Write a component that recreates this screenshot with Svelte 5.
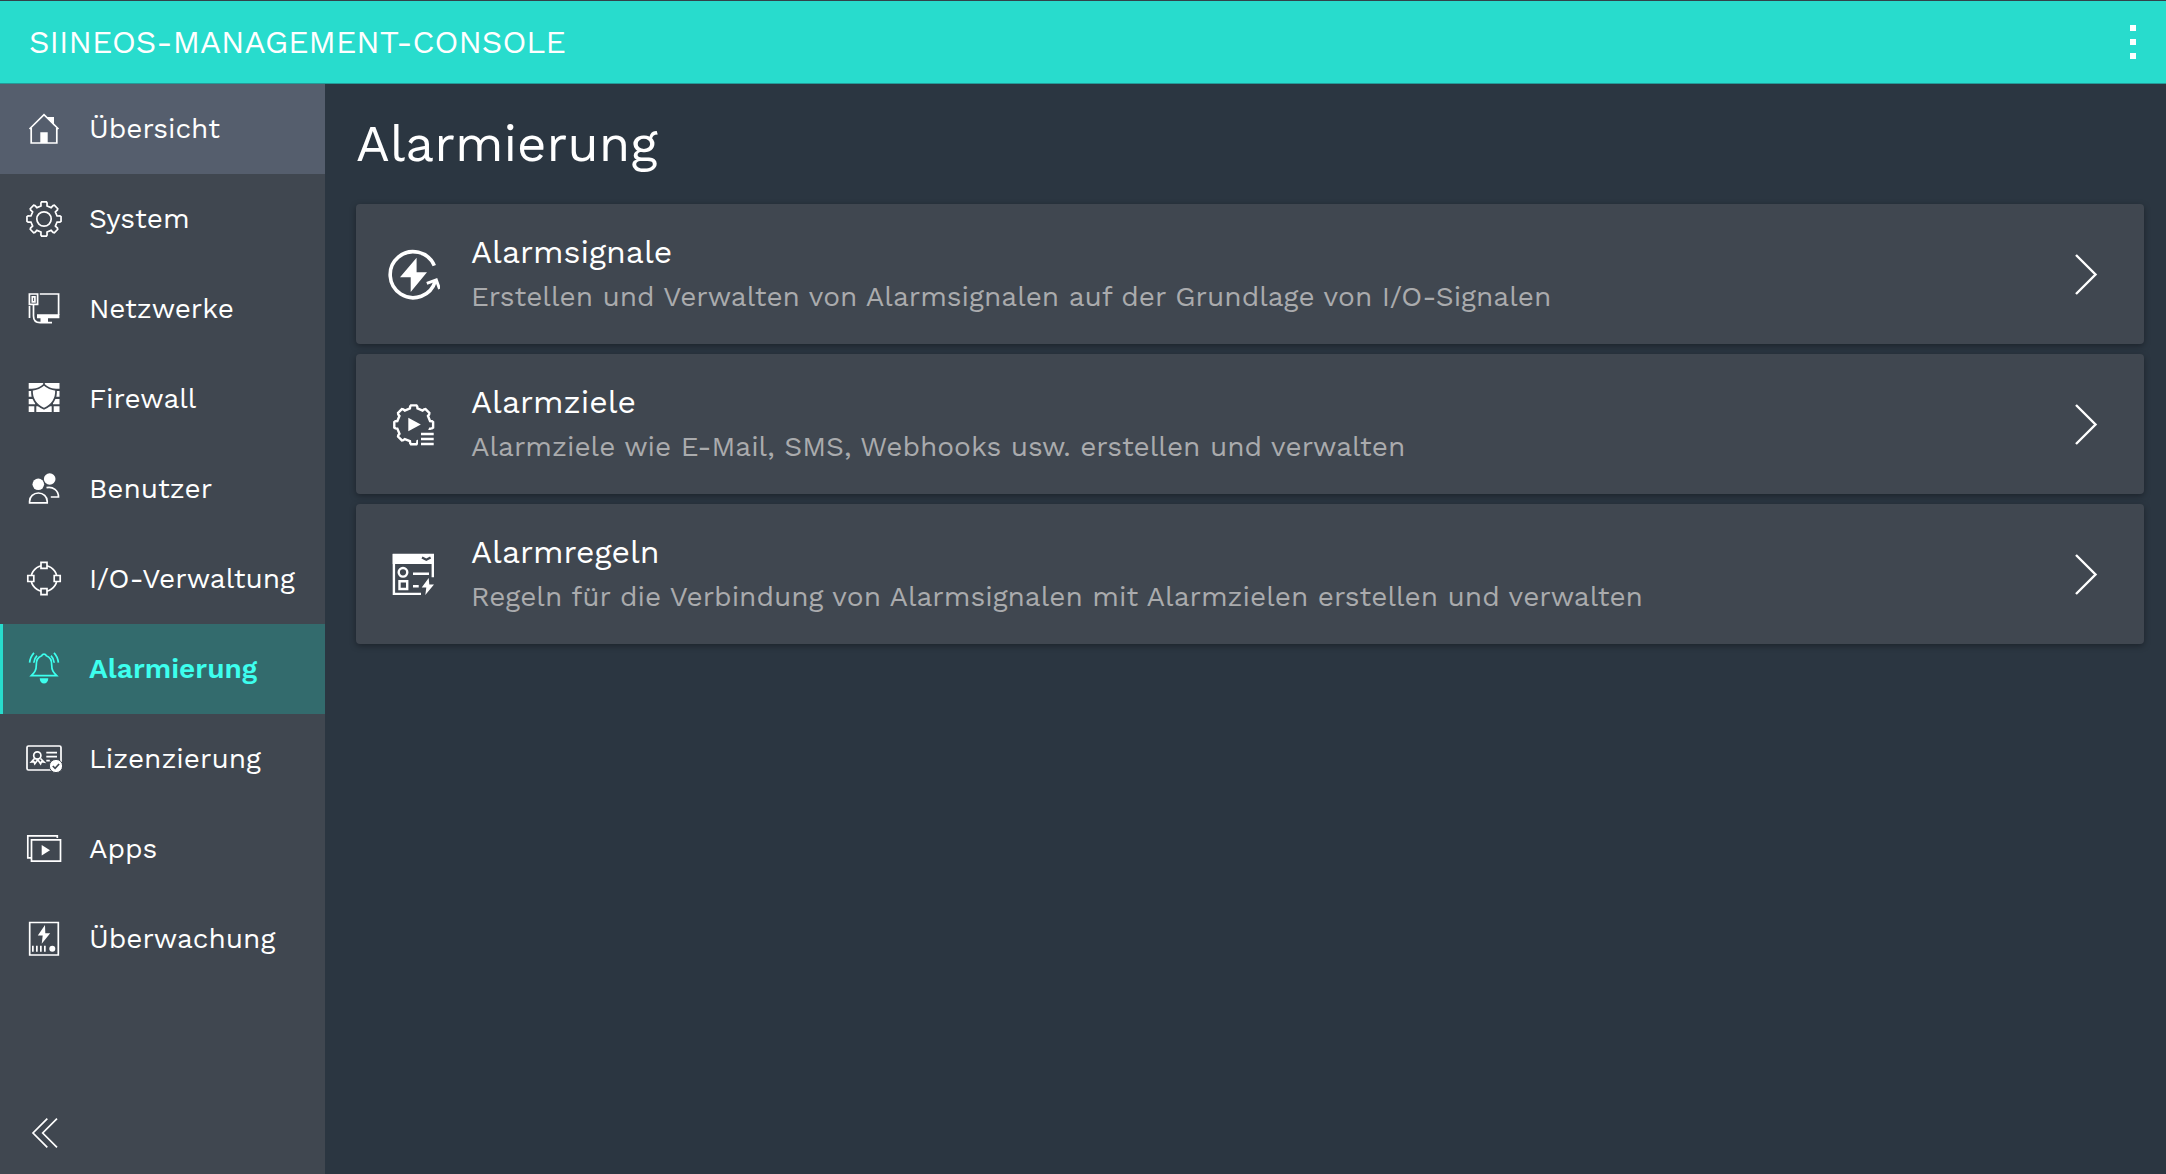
<script lang="ts">
  type Entry = { id: string; label: string };
  type Card = { id: string; title: string; text: string };

  const entries: Entry[] = [
    { id: "overview", label: "Übersicht" },
    { id: "system", label: "System" },
    { id: "networks", label: "Netzwerke" },
    { id: "firewall", label: "Firewall" },
    { id: "users", label: "Benutzer" },
    { id: "io", label: "I/O-Verwaltung" },
    { id: "alarms", label: "Alarmierung" },
    { id: "license", label: "Lizenzierung" },
    { id: "apps", label: "Apps" },
    { id: "monitoring", label: "Überwachung" },
  ];

  const cards: Card[] = [
    { id: "signals", title: "Alarmsignale", text: "Erstellen und Verwalten von Alarmsignalen auf der Grundlage von I/O-Signalen" },
    { id: "targets", title: "Alarmziele", text: "Alarmziele wie E-Mail, SMS, Webhooks usw. erstellen und verwalten" },
    { id: "rules", title: "Alarmregeln", text: "Regeln für die Verbindung von Alarmsignalen mit Alarmzielen erstellen und verwalten" },
  ];

  let active = $state("alarms");

  // outline of a cog with eight teeth
  function gear(cx: number, cy: number, outer: number, inner: number) {
    const steps: [number, number][] = [[-13, inner], [-11, outer - 1], [-8, outer], [8, outer], [11, outer - 1], [13, inner]];
    const points: string[] = [];
    for (let tooth = 0; tooth < 8; tooth++) {
      for (const [offset, radius] of steps) {
        const a = ((tooth * 45 + offset) * Math.PI) / 180;
        points.push(`${(cx + radius * Math.sin(a)).toFixed(2)} ${(cy - radius * Math.cos(a)).toFixed(2)}`);
      }
    }
    return `M${points.join("L")}Z`;
  }
</script>

<div class="app">
  <header>
    <span class="brand">SIINEOS-MANAGEMENT-CONSOLE</span>
    <button class="menu" aria-label="Menü">
      <svg viewBox="0 0 6 34" width="6" height="34"><path d="M0 0h6v6H0zM0 14h6v6H0zM0 28h6v6H0z" /></svg>
    </button>
  </header>

  <div class="body">
    <nav>
      {#each entries as entry (entry.id)}
        <a href="#{entry.id}" class:hover={entry.id === "overview"} class:active={entry.id === active} onclick={() => (active = entry.id)}>
          <svg class="icon" viewBox="0 0 36 36" width="36" height="36" aria-hidden="true">
            {#if entry.id === "overview"}
              <path d="M3.5 18 18 3.7 32.5 18M5.2 17v15h25.6V17" />
              <path class="fill" d="M14.3 21.3h7.4V32h-7.4zM20.5 6H28v8.5z" />
            {:else if entry.id === "system"}
              <path d={gear(18, 18, 17.2, 13.4)} />
              <circle cx="18" cy="18" r="7.2" />
            {:else if entry.id === "networks"}
              <path d="M3.4 3h8.2v10.3H3.4zM6.3 5.8h2.6v5H6.3zM13.8 3h18.8v21M7.5 13.3V25q0 6.6 6.6 6.6H26M3.5 15v12" />
              <path class="fill" d="M11 23.3h22.4v4H22v4H14.5v-4H11z" />
            {:else if entry.id === "firewall"}
              <path class="fill" d="M2.7 2h14.5v5.7H2.7zM18.8 2h14.7v5.7H18.8zM2.7 10h3v5.7h-3zM7.5 10h21v5.7h-21zM30.2 10h3.3v5.7h-3.3zM2.7 18h6.5v5.3H2.7zM11 18h14v5.3H11zM27 18h6.5v5.3H27zM2.7 25.2h5.6V31H2.7zM10.3 25.2h15.4V31H10.3zM27.7 25.2h5.8V31h-5.8z" />
              <path class="shield" d="M18 3.6q5 4.5 12 5.2c.4 8-3 15-12 19-9-4-12.400-11-12-19q7-.7 12-5.200z" />
            {:else if entry.id === "users"}
              <circle class="fill" cx="23.7" cy="8" r="5.8" />
              <circle class="fill" cx="12.3" cy="13.3" r="5.8" />
              <path d="M3.6 31.8v-1.5a8.8 8.3 0 0 1 17.6 0v1.5zM20.5 16.7c6.5-1.3 12 2.6 12 9.3h-7.7" />
            {:else if entry.id === "io"}
              <circle cx="18" cy="17.5" r="13" />
              <path class="knob" d="M15 1.3h6v6h-6zM15 27.7h6v6h-6zM1.8 14.5h6v6h-6zM28.2 14.5h6v6h-6z" />
            {:else if entry.id === "alarms"}
              <path d="M15.7 4.7c-4 1.3-5.5 5-5.4 9.3.1 5.5-2 7.5-5 10.600h25.400c-3-3.100-5.100-5.100-5-10.600.1-4.300-1.400-8-5.400-9.300-1-2.200-3.600-2.200-4.600 0zM3.600 11.700q.7-6 4.400-9.800M7.800 11.700q.3-4 3.200-7M32.400 11.700q-.7-6-4.400-9.800M28.200 11.700q-.3-4-3.200-7" />
              <path class="fill" d="M13.7 27.3h8.6c0 7-8.6 7-8.6 0z" />
            {:else if entry.id === "license"}
              <rect x="1" y="5" width="34" height="24" rx="1.5" />
              <circle cx="11.3" cy="14.5" r="3.6" />
              <path d="M8.5 17.5 5.5 21l2.5-.3.8 2 3-4 2.8 4 .9-2 2.5.3-3.5-3.5M20.3 11.7H31M20.3 15.7H31M20.3 19.7h3.5" />
              <circle class="badge" cx="30" cy="25" r="6.6" />
              <path class="tick" d="m26.8 25 2.3 2.3 4-4.3" />
            {:else if entry.id === "apps"}
              <path d="M31.3 7V4.8H1.8v22H5M5.5 8.8h29v21.400h-29z" />
              <path class="fill" d="M15.7 14v10.5l8.3-5.2z" />
            {:else}
              <path d="M3.7 1.5h28.6V34H3.7z" />
              <path class="fill" d="M19 4 11.8 14.5h4.9l-1 8.3 8.5-10.600h-4.900zM6 24.800h1.700v6H6zM10 24.800h1.700v6H10zM14 24.800h1.700v6H14zM18 24.800h1.700v6H18z" />
              <circle class="fill" cx="26.3" cy="27.8" r="3" />
            {/if}
          </svg>
          <span class="label">{entry.label}</span>
        </a>
      {/each}
      <button class="collapse" aria-label="Menü einklappen">
        <svg class="icon" viewBox="0 0 36 36" width="36" height="36"><path d="M21.3 3.7 7 18l14.3 14.3M31 3.7 16.7 18 31 32.3" /></svg>
      </button>
    </nav>

    <main>
      <h1>Alarmierung</h1>
      {#each cards as card (card.id)}
        <a class="card" href="#{card.id}">
          <svg class="icon" viewBox="0 0 52 52" width="52" height="52" aria-hidden="true">
            {#if card.id === "signals"}
              <path class="bold" d="M46.3 17.6A23 23 0 1 0 47.3 33" />
              <path class="arrow" d="m38.8 35.3 9.5-3.4 3.3 9" />
              <path class="fill" d="M28.6 9.7 12 29.3h10.7V44L39 24.3H28.6z" />
            {:else if card.id === "targets"}
              <clipPath id="cog"><path d="M0 0h52v32H30v20H0z" /></clipPath>
              <path class="medium" clip-path="url(#cog)" d={gear(25.7, 26.8, 19.6, 16.8)} />
              <path class="medium" d="M33 36h12.7M33 41h12.7M33 46h12.7" />
              <path class="fill" d="M20.3 19.7v13.6l12.5-6.8z" />
            {:else}
              <path class="medium" d="M44.8 29.3V7H5.9v38.9H33M25 25.7h16M25 38.3h5.7M11.5 33.3h7.7v7.7h-7.700z" />
              <circle class="medium" cx="15" cy="24.3" r="4.3" />
              <path class="fill" d="M4.7 6H46v10H4.7zM40.7 30l-7 9.5h4.6L37.3 47 46 36.5h-4.700z" />
              <path class="notch" d="m34 9.5 4.3 2.2 4.3-2.2" />
            {/if}
          </svg>
          <span class="text">
            <strong>{card.title}</strong>
            <span>{card.text}</span>
          </span>
          <svg class="icon next" viewBox="0 0 26 44" width="26" height="44" aria-hidden="true"><path d="m3 3 19.5 19.500L3 42" /></svg>
        </a>
      {/each}
    </main>
  </div>
</div>

<style>
  :global(body) { margin: 0; background: #2b3641; }
  .app { display: flex; flex-direction: column; min-height: 100vh; color: #fff; font-family: "Work Sans", Inter, sans-serif; font-size: 28px; }
  header { display: flex; align-items: center; justify-content: space-between; box-sizing: border-box; height: 84px; padding-left: 29px; border-top: 1px solid #33434b; border-bottom: 1px solid #249a98; background: #28dccd; }
  .brand { font-size: 32px; }
  button { padding: 0; border: 0; background: none; color: inherit; cursor: pointer; }
  .menu { display: flex; align-items: center; justify-content: center; width: 66px; height: 74px; border-radius: 4px; }
  .menu svg { fill: #fff; }
  .body { display: flex; flex: 1; }
  nav { display: flex; flex-direction: column; flex: none; box-sizing: border-box; width: 325px; background: #404750; }
  nav a { display: flex; align-items: center; gap: 27px; box-sizing: border-box; height: 90px; padding-left: 23px; border-left: 3px solid transparent; color: #fff; text-decoration: none; }
  nav .hover { border-left-color: #555e6d; background: #555e6d; }
  nav .active { border-left-color: #28dccd; background: #336b6d; color: #3dffee; font-weight: 600; }
  .label { padding-bottom: 2px; }
  .collapse { display: flex; margin: auto 0 23px 26px; width: 36px; }
  .icon { flex: none; fill: none; stroke: currentColor; stroke-width: 1.7; }
  .fill { fill: currentColor; stroke: none; }
  .shield { fill: currentColor; stroke: #404750; }
  .knob { fill: #404750; }
  .badge { fill: currentColor; stroke: #404750; stroke-width: 1; }
  .tick { stroke: #404750; }
  .bold { stroke-width: 3.6; }
  .arrow { stroke-width: 3; }
  .medium { stroke-width: 2.4; }
  .notch { stroke: #404750; stroke-width: 2.4; }
  main { flex: 1; padding: 30px 22px 30px 31px; }
  h1 { margin: 0 0 30px; font-size: 51px; font-weight: 400; line-height: 60px; }
  .card { display: flex; align-items: center; gap: 31px; box-sizing: border-box; height: 140px; margin-bottom: 10px; padding: 0 45px 0 32px; border-radius: 4px; background: #404750; box-shadow: 0 2px 6px rgba(0, 0, 0, 0.35); color: #fff; text-decoration: none; }
  .text { display: flex; flex: 1; flex-direction: column; gap: 1px; padding-top: 1px; }
  .text strong { font-size: 32px; font-weight: 400; line-height: 44px; }
  .text span { color: #aaabad; line-height: 44px; }
  .next { stroke-width: 2.4; }
</style>
